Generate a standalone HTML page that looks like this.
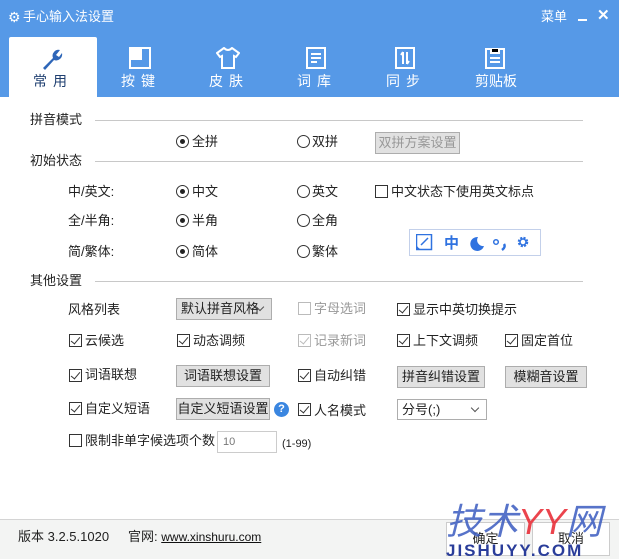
<!DOCTYPE html><html><head><meta charset="utf-8"><style>
*{margin:0;padding:0;box-sizing:border-box}
body{width:619px;height:559px;position:relative;overflow:hidden;background:#fff;font-family:"Liberation Sans","Noto Sans CJK SC",sans-serif;font-size:13px;color:#222}
.a{position:absolute;white-space:nowrap;line-height:16px}
.top{position:absolute;left:0;top:0;width:619px;height:97px;background:#5699e7}
.tab{position:absolute;top:37px;width:88px;height:60px;text-align:center;color:#fff;font-size:14px;letter-spacing:6px}
.tab .t{position:absolute;left:0;right:0;top:34px}
.hl{position:absolute;height:1px;background:#c8c8c8}
.rd{position:absolute;width:13px;height:13px;border:1px solid #333;border-radius:50%;background:#fff}
.rd.on::after{content:"";position:absolute;left:3px;top:3px;width:5px;height:5px;border-radius:50%;background:#222}
.cb{position:absolute;width:13px;height:13px;border:1px solid #333;background:#fff}
.cb.on::after{content:"";position:absolute;left:3px;top:0px;width:4px;height:8px;border:solid #333;border-width:0 1.5px 1.5px 0;transform:rotate(40deg)}
.cb.dis{border-color:#bbb}.cb.dis.on::after{border-color:#bbb}
.btn{position:absolute;background:#e1e1e1;border:1px solid #adadad;text-align:center;line-height:19px}
.sel{position:absolute;background:#e1e1e1;border:1px solid #adadad;line-height:19px;padding-left:4px}
.sel::after{content:"";position:absolute;right:8px;top:5px;width:5px;height:5px;border:solid #555;border-width:0 1px 1px 0;transform:rotate(45deg)}
</style></head><body>
<div class="top"></div>
<div class="a" style="left:8px;top:9px;color:#fff;font-size:14px">⚙</div>
<div class="a" style="left:23px;top:9px;color:#fff">手心输入法设置</div>
<div class="a" style="left:541px;top:9px;color:#fff">菜单</div>
<div style="position:absolute;left:578px;top:19px;width:9px;height:2px;background:#fff"></div>
<div class="a" style="left:597px;top:8px;color:#fff;font-weight:bold;font-size:15px">✕</div>
<div class="tab" style="left:9px;background:#fff;color:#1f3f70;border-radius:2px 2px 0 0">
<svg style="position:absolute;left:31px;top:10px" width="24" height="24" viewBox="0 0 24 24"><path d="M3 21 L13 11 A6 6 0 0 1 20 3 L16 8 L19 10 L22 6 A6 6 0 0 1 14 13 L5 23 Z" fill="#2e66b8"/></svg>
<div class="t">常用</div></div>
<div class="tab" style="left:97px"><svg style="position:absolute;left:32px;top:10px" width="22" height="22"><rect x="1" y="1" width="20" height="20" fill="none" stroke="#fff" stroke-width="2"/><rect x="1" y="1" width="12" height="12" fill="#fff"/></svg><div class="t">按键</div></div>
<div class="tab" style="left:185px"><svg style="position:absolute;left:31px;top:10px" width="24" height="22"><path d="M8 1 L1 6 L4 10 L6 9 L6 21 L18 21 L18 9 L20 10 L23 6 L16 1 Q12 5 8 1Z" fill="none" stroke="#fff" stroke-width="2"/></svg><div class="t">皮肤</div></div>
<div class="tab" style="left:273px"><svg style="position:absolute;left:33px;top:10px" width="20" height="22"><rect x="1" y="1" width="18" height="20" fill="none" stroke="#fff" stroke-width="2"/><path d="M5 7H15M5 11H15M5 15H11" stroke="#fff" stroke-width="2"/></svg><div class="t">词库</div></div>
<div class="tab" style="left:362px"><svg style="position:absolute;left:33px;top:10px" width="20" height="22"><rect x="1" y="1" width="18" height="20" fill="none" stroke="#fff" stroke-width="2"/><path d="M8 5V17M12 5V17M6 8L8 5M14 14L12 17" stroke="#fff" stroke-width="2"/></svg><div class="t">同步</div></div>
<div class="tab" style="left:452px;letter-spacing:0"><svg style="position:absolute;left:33px;top:10px" width="20" height="22"><rect x="1" y="2" width="18" height="19" fill="none" stroke="#fff" stroke-width="2"/><path d="M6 2V6H14V2M5 11H15M5 15H15" stroke="#fff" stroke-width="2"/></svg><div class="t">剪贴板</div></div>

<div class="a" style="left:30px;top:112px">拼音模式</div><div class="hl" style="left:95px;top:120px;width:488px"></div>
<div class="rd on" style="left:176px;top:135px"></div><div class="a" style="left:192px;top:134px">全拼</div>
<div class="rd" style="left:297px;top:135px"></div><div class="a" style="left:312px;top:134px">双拼</div>
<div class="btn" style="left:375px;top:132px;width:85px;height:22px;color:#999">双拼方案设置</div>
<div class="a" style="left:30px;top:153px">初始状态</div><div class="hl" style="left:95px;top:161px;width:488px"></div>
<div class="a" style="left:68px;top:184px">中/英文:</div>
<div class="rd on" style="left:176px;top:185px"></div><div class="a" style="left:192px;top:184px">中文</div>
<div class="rd" style="left:297px;top:185px"></div><div class="a" style="left:312px;top:184px">英文</div>
<div class="cb" style="left:375px;top:185px"></div><div class="a" style="left:391px;top:184px">中文状态下使用英文标点</div>
<div class="a" style="left:68px;top:213px">全/半角:</div>
<div class="rd on" style="left:176px;top:214px"></div><div class="a" style="left:192px;top:213px">半角</div>
<div class="rd" style="left:297px;top:214px"></div><div class="a" style="left:312px;top:213px">全角</div>
<div class="a" style="left:68px;top:244px">简/繁体:</div>
<div class="rd on" style="left:176px;top:245px"></div><div class="a" style="left:192px;top:244px">简体</div>
<div class="rd" style="left:297px;top:245px"></div><div class="a" style="left:312px;top:244px">繁体</div>
<div style="position:absolute;left:409px;top:229px;width:132px;height:27px;border:1px solid #c3d0ea"></div>
<svg style="position:absolute;left:416px;top:234px" width="120" height="17"><rect x="0.5" y="0.5" width="15" height="15" fill="none" stroke="#2f72e0" stroke-width="1.5"/><path d="M0 16 L0 8 A8 8 0 0 0 8 16Z" fill="#2f72e0"/><path d="M5 11 L12 4" stroke="#2f72e0" stroke-width="1.5"/><text x="28" y="14" fill="#2f72e0" font-size="15" font-weight="bold" font-family="Noto Sans CJK SC">中</text><path d="M62 3 A7 7 0 1 0 68 12 A6 6 0 0 1 62 3Z" fill="#2f72e0"/><circle cx="80" cy="8" r="2.3" fill="none" stroke="#2f72e0" stroke-width="1.5"/><path d="M88 10 Q90 13 86 16" stroke="#2f72e0" stroke-width="2.5" fill="none"/><circle cx="107" cy="8" r="4" fill="none" stroke="#2f72e0" stroke-width="2.5" stroke-dasharray="2 1.2"/><circle cx="107" cy="8" r="3" fill="none" stroke="#2f72e0" stroke-width="1.5"/></svg>
<div class="a" style="left:30px;top:273px">其他设置</div><div class="hl" style="left:95px;top:281px;width:488px"></div>
<div class="a" style="left:68px;top:302px">风格列表</div>
<div class="sel" style="left:176px;top:298px;width:96px;height:22px">默认拼音风格</div>
<div class="cb dis" style="left:298px;top:302px"></div><div class="a" style="left:314px;top:301px;color:#999">字母选词</div>
<div class="cb on" style="left:397px;top:303px"></div><div class="a" style="left:413px;top:302px">显示中英切换提示</div>
<div class="cb on" style="left:69px;top:334px"></div><div class="a" style="left:85px;top:333px">云候选</div>
<div class="cb on" style="left:177px;top:334px"></div><div class="a" style="left:193px;top:333px">动态调频</div>
<div class="cb dis on" style="left:298px;top:334px"></div><div class="a" style="left:314px;top:333px;color:#999">记录新词</div>
<div class="cb on" style="left:397px;top:334px"></div><div class="a" style="left:413px;top:333px">上下文调频</div>
<div class="cb on" style="left:505px;top:334px"></div><div class="a" style="left:521px;top:333px">固定首位</div>
<div class="cb on" style="left:69px;top:369px"></div><div class="a" style="left:85px;top:367px">词语联想</div>
<div class="btn" style="left:176px;top:365px;width:94px;height:22px">词语联想设置</div>
<div class="cb on" style="left:298px;top:369px"></div><div class="a" style="left:314px;top:368px">自动纠错</div>
<div class="btn" style="left:397px;top:366px;width:88px;height:22px">拼音纠错设置</div>
<div class="btn" style="left:505px;top:366px;width:82px;height:22px">模糊音设置</div>
<div class="cb on" style="left:69px;top:402px"></div><div class="a" style="left:85px;top:401px">自定义短语</div>
<div class="btn" style="left:176px;top:398px;width:94px;height:22px">自定义短语设置</div>
<div style="position:absolute;left:274px;top:402px;width:15px;height:15px;border-radius:50%;background:#3a86e0;color:#fff;font-size:11px;font-weight:bold;text-align:center;line-height:15px">?</div>
<div class="cb on" style="left:298px;top:403px"></div><div class="a" style="left:314px;top:403px">人名模式</div>
<div class="sel" style="left:397px;top:399px;width:90px;height:21px;background:#fff">分号(;)</div>
<div class="cb" style="left:69px;top:434px"></div><div class="a" style="left:85px;top:433px">限制非单字候选项个数</div>
<div style="position:absolute;left:217px;top:431px;width:60px;height:22px;border:1px solid #ccc;font-size:11px;color:#777;padding:4px 0 0 5px">10</div>
<div class="a" style="left:282px;top:436px;font-size:11px">(1-99)</div>
<div style="position:absolute;left:0;top:519px;width:619px;height:40px;background:#f3f4f3;border-top:1px solid #d4d4d4"></div>
<div class="a" style="left:18px;top:529px;font-size:13px">版本 3.2.5.1020</div>
<div class="a" style="left:128px;top:529px;font-size:13px">官网: <span style="text-decoration:underline;color:#111;font-size:12px">www.xinshuru.com</span></div>
<div class="btn" style="left:446px;top:522px;width:79px;height:34px;background:#fff;line-height:32px;border-color:#ccc">确定</div>
<div class="btn" style="left:532px;top:522px;width:78px;height:34px;background:#fff;line-height:32px;border-color:#ccc">取消</div>
<div class="a" style="left:446px;top:500px;font-size:36px;line-height:44px;font-style:italic;color:#3a5bc0;opacity:.85">技术<span style="color:#e8242e">YY</span>网</div>
<div class="a" style="left:446px;top:543px;font-size:17px;font-weight:bold;color:#2a3d9a;letter-spacing:2px">JISHUYY.COM</div>
</body></html>
